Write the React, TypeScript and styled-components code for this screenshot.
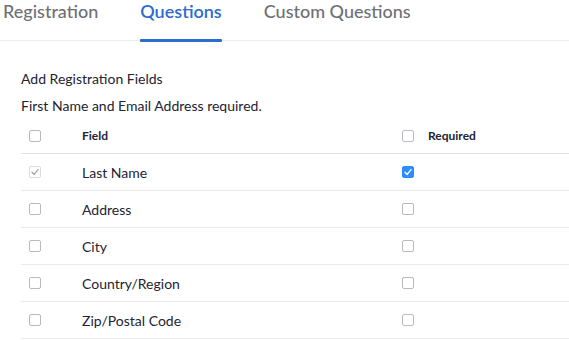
import React from "react";
import styled, { createGlobalStyle, css } from "styled-components";

const Global = createGlobalStyle`
  html, body { margin: 0; padding: 0; background: #fff; }
  body { font-family: Lato, "Open Sans", sans-serif; color: #232333; }
`;

const Page = styled.div`
  width: 569px;
  height: 340px;
  overflow: hidden;
  background: #fff;
`;

const Tabs = styled.div`
  display: flex;
  gap: 42px;
  padding-left: 3px;
  height: 41px;
  border-bottom: 1px solid #ededf0;
  box-sizing: border-box;
`;

const Tab = styled.div<{ $active?: boolean }>`
  position: relative;
  font-size: 18px;
  line-height: 22px;
  color: ${(p) => (p.$active ? "#2d6ccf" : "#6e7075")};
  font-weight: ${(p) => (p.$active ? 600 : 500)};
  height: 41px;
  box-sizing: border-box;
  ${(p) =>
    p.$active &&
    css`
      &::after {
        content: "";
        position: absolute;
        left: 0;
        right: 0;
        bottom: -1px;
        height: 3px;
        background: #2d6ccf;
        border-radius: 1px;
      }
    `}
`;

const Content = styled.div`
  padding: 29px 0 0 21px;
`;

const Title = styled.div`
  font-size: 14px;
  line-height: 18px;
  color: #232333;
`;

const Note = styled.div`
  font-size: 14px;
  line-height: 18px;
  margin-top: 9px;
`;

const Table = styled.div`
  display: grid;
  grid-template-columns: 61px 320px 1fr;
  margin-top: 3px;
`;

const Cell = styled.div<{ $head?: boolean }>`
  display: flex;
  align-items: center;
  height: ${(p) => (p.$head ? "35px" : "36px")};
  border-bottom: 1px solid ${(p) => (p.$head ? "#e2e2e6" : "#ebebee")};
  font-size: ${(p) => (p.$head ? "12px" : "14px")};
  font-weight: ${(p) => (p.$head ? 700 : 400)};
  color: #232333;
`;

const BoxCell = styled(Cell)`
  padding-left: 8px;
`;

const Box = styled.span<{ $checked?: boolean; $disabled?: boolean }>`
  display: inline-flex;
  align-items: center;
  justify-content: center;
  width: 12px;
  height: 12px;
  border-radius: 2px;
  box-sizing: border-box;
  border: 1px solid
    ${(p) => (p.$checked && !p.$disabled ? "#2d8cff" : p.$disabled ? "#dcdce0" : "#b9b9c0")};
  background: ${(p) => (p.$checked && !p.$disabled ? "#2d8cff" : "#fff")};
`;

const HeadReq = styled.span`
  display: inline-flex;
  align-items: center;
  gap: 14px;
`;

const Check = ({ color }: { color: string }) => (
  <svg width="10" height="10" viewBox="0 0 10 10">
    <path d="M2 5.2 L4.2 7.4 L8 2.6" fill="none" stroke={color} strokeWidth="1.4" strokeLinecap="round" strokeLinejoin="round" />
  </svg>
);

const rows = [
  { name: "Last Name", on: true },
  { name: "Address" },
  { name: "City" },
  { name: "Country/Region" },
  { name: "Zip/Postal Code" },
];

export default function App() {
  return (
    <Page>
      <Global />
      <Tabs>
        <Tab>Registration</Tab>
        <Tab $active>Questions</Tab>
        <Tab>Custom Questions</Tab>
      </Tabs>
      <Content>
        <Title>Add Registration Fields</Title>
        <Note>First Name and Email Address required.</Note>
        <Table>
          <BoxCell $head>
            <Box />
          </BoxCell>
          <Cell $head>Field</Cell>
          <Cell $head>
            <HeadReq>
              <Box />
              Required
            </HeadReq>
          </Cell>
          {rows.map((r) => (
            <React.Fragment key={r.name}>
              <BoxCell>
                <Box $checked={r.on} $disabled={r.on}>
                  {r.on && <Check color="#a8a8b0" />}
                </Box>
              </BoxCell>
              <Cell>{r.name}</Cell>
              <Cell>
                <Box $checked={r.on}>{r.on && <Check color="#fff" />}</Box>
              </Cell>
            </React.Fragment>
          ))}
        </Table>
      </Content>
    </Page>
  );
}
